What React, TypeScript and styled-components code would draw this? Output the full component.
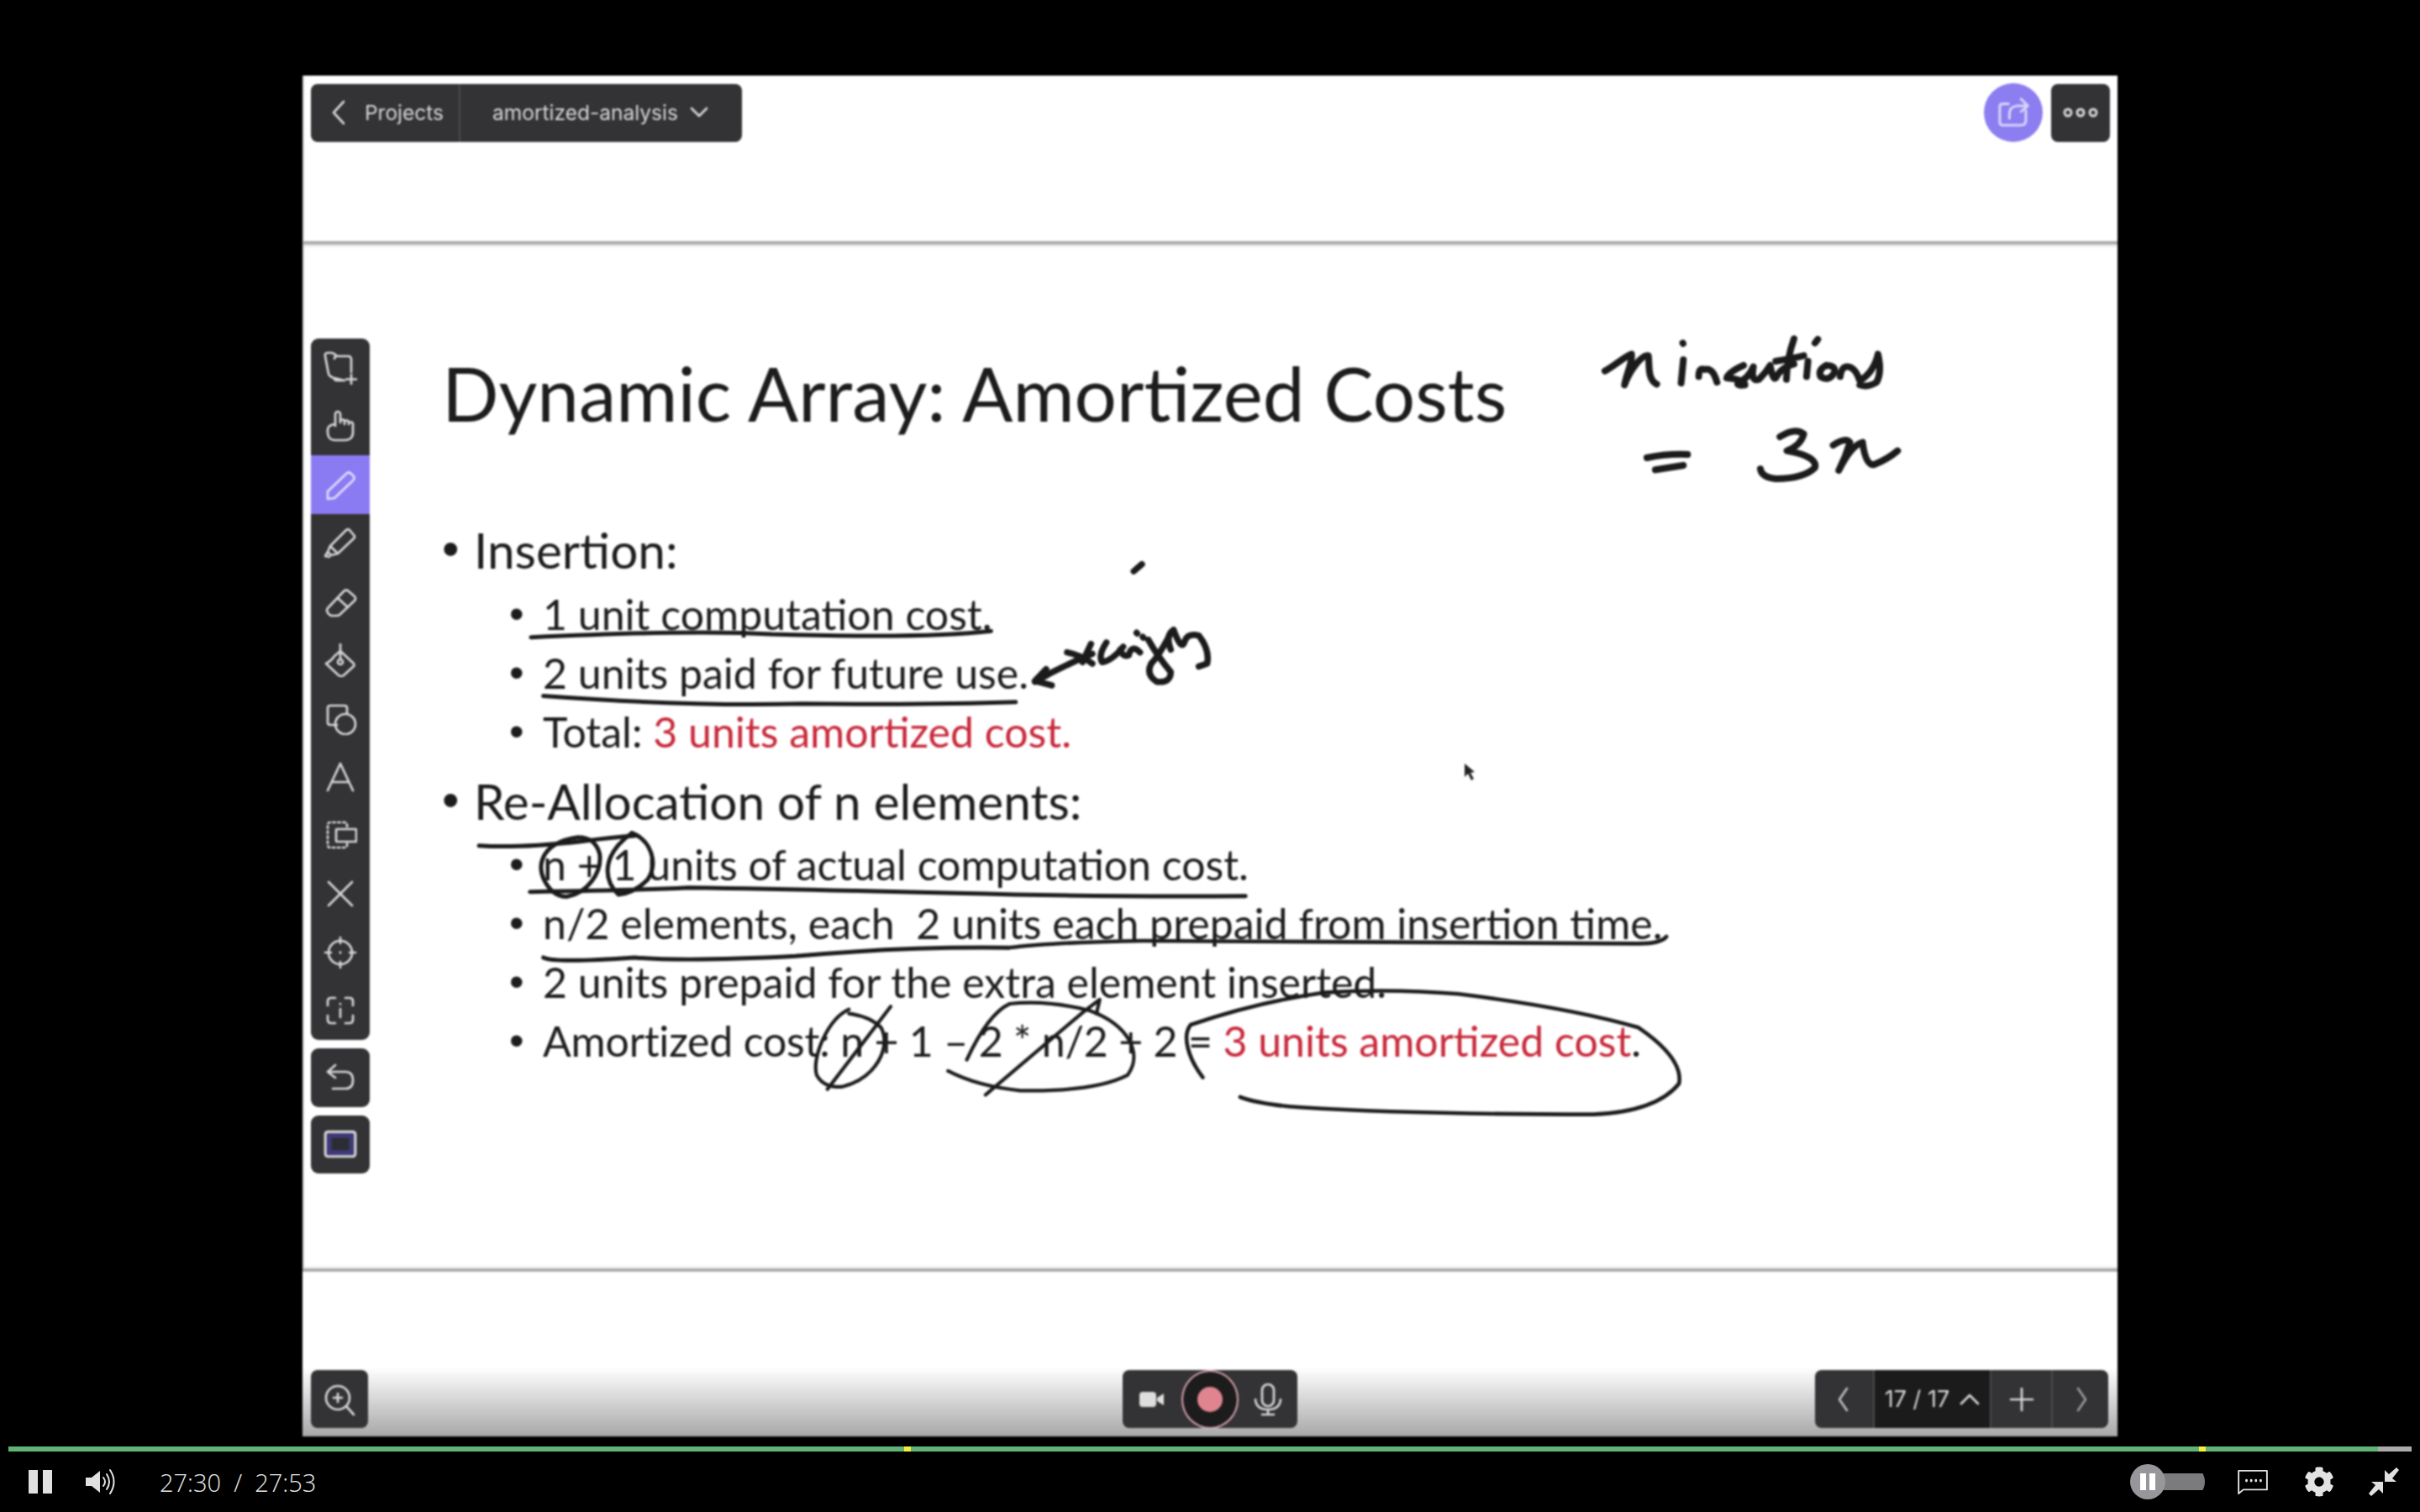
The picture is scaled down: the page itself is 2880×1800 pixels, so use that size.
import { ReactNode } from 'react'
import styled, { createGlobalStyle } from 'styled-components'
import { FaCog } from 'react-icons/fa'

const GlobalStyle = createGlobalStyle`
  html, body {
    margin: 0;
    padding: 0;
    background: #000;
  }
`

const Page = styled.div`
  width: 2880px;
  height: 1800px;
  background: #000;
  overflow: hidden;
  padding-top: 90px;
  box-sizing: border-box;
`

const Frame = styled.div`
  position: relative;
  width: 2160px;
  height: 1620px;
  margin-left: 360px;
  background: #fff;
  display: flex;
  flex-direction: column;
  filter: blur(0.9px);
  box-shadow: inset 2px 0 0 #cfcfcf;
`

const TopBand = styled.div`
  height: 201px;
  flex: none;
  border-bottom: 4px solid #adadad;
  box-sizing: border-box;
  box-shadow: 0 1px 4px rgba(0, 0, 0, 0.2);
`

const BottomBand = styled.div`
  height: 200px;
  flex: none;
  box-sizing: border-box;
  border-top: 4px solid #adadad;
  box-shadow: 0 -1px 4px rgba(0, 0, 0, 0.12);
  background: linear-gradient(#fff 0, #fff 58%, #a8a8a8 100%);
`

const Slide = styled.div`
  flex: 1;
  padding: 127px 0 0 166px;
  font-family: Lato, 'Liberation Sans', sans-serif;
  color: #1c1c1c;
`

const Title = styled.h1`
  margin: 0 0 98px;
  font-size: 89px;
  line-height: 100px;
  font-weight: 400;
`

const BulletList = styled.ul`
  list-style: none;
  margin: 0;
  padding: 0;
`

const Bullet = styled.li<{ $sub?: boolean; $gap?: number }>`
  display: flex;
  white-space: pre;
  margin-left: ${p => (p.$sub ? 80 : 0)}px;
  margin-top: ${p => p.$gap ?? 0}px;
  font-size: ${p => (p.$sub ? 50 : 58.5)}px;
  line-height: ${p => (p.$sub ? 70 : 76)}px;

  &::before {
    content: '•';
    font-family: 'Liberation Sans', sans-serif;
    width: ${p => (p.$sub ? 40 : 38)}px;
    flex: none;
  }
`

const Tight = styled.span`
  letter-spacing: -0.2px;
`

const Red = styled.span`
  color: #c8283a;
`

const Ink = styled.svg`
  position: absolute;
  left: 0;
  top: 0;
  width: 2160px;
  height: 1620px;
  pointer-events: none;
`

const InkPath = styled.path`
  fill: none;
  stroke: #1b1b1b;
  stroke-linecap: round;
  stroke-linejoin: round;
  vector-effect: non-scaling-stroke;
`

const Chrome = styled.div`
  position: absolute;
  inset: 0;
  box-sizing: border-box;
  padding: 9px 9px 10px 10px;
  display: flex;
  flex-direction: column;
  justify-content: space-between;
  font-family: Inter, 'Liberation Sans', sans-serif;
`

const ChromeRow = styled.div`
  display: flex;
  justify-content: space-between;
  align-items: center;
`

const BottomRow = styled.div`
  display: grid;
  grid-template-columns: 1fr auto 1fr;
  align-items: center;
  margin-right: 2px;

  & > :first-child {
    justify-self: start;
  }
  & > :last-child {
    justify-self: end;
  }
`

const Group = styled.div`
  display: flex;
  align-items: center;
  gap: 10px;
`

const Panel = styled.div`
  display: flex;
  align-items: stretch;
  height: 69px;
  background: #333335;
  border-radius: 8px;
  overflow: hidden;
  color: #d6d6d6;
`

const PanelCell = styled.div<{ $w: number; $dark?: boolean; $div?: boolean; $fs?: number }>`
  width: ${p => p.$w}px;
  flex: none;
  box-sizing: border-box;
  display: flex;
  align-items: center;
  justify-content: center;
  gap: 12px;
  font-size: ${p => p.$fs ?? 24.5}px;
  background: ${p => (p.$dark ? '#1b1b1c' : 'transparent')};
  border-left: ${p => (p.$div ? '2px solid #4a4a4c' : 'none')};
`

const Rail = styled.div`
  display: flex;
  flex-direction: column;
  align-items: stretch;
  width: 70px;
  gap: 10px;
  margin-top: 34px;
  margin-bottom: 34px;
`

const RailPanel = styled.div`
  display: flex;
  flex-direction: column;
  background: #333335;
  border-radius: 9px;
  overflow: hidden;
  padding: 0;
  color: #d6d6d6;
`

const RailButton = styled.div<{ $active?: boolean }>`
  height: 69.6px;
  display: flex;
  align-items: center;
  justify-content: center;
  background: ${p => (p.$active ? '#8b7bf3' : 'transparent')};
  color: ${p => (p.$active ? '#e2dcfc' : 'inherit')};
`

const ShareButton = styled.div`
  width: 70px;
  height: 70px;
  border-radius: 50%;
  background: #8c7df0;
  color: #d8d2fb;
  display: flex;
  align-items: center;
  justify-content: center;
`

const Icon = styled.svg<{ $s?: number }>`
  width: ${p => p.$s ?? 40}px;
  height: ${p => p.$s ?? 40}px;
  fill: none;
  stroke: currentColor;
  stroke-width: 2.7;
  stroke-linecap: round;
  stroke-linejoin: round;
  flex: none;
`

const RecordRing = styled.div`
  width: 70px;
  height: 70px;
  box-sizing: border-box;
  border-radius: 50%;
  border: 2px solid #d9a3ad;
  background: #1c1c1d;
  display: flex;
  align-items: center;
  justify-content: center;

  &::after {
    content: '';
    width: 30px;
    height: 30px;
    border-radius: 50%;
    background: #e0858f;
  }
`

const Player = styled.div`
  margin-top: 12px;
  padding: 0 10px;
`

const Progress = styled.div`
  position: relative;
  height: 6px;
  background: #ababab;
`

const Played = styled.div`
  height: 100%;
  background: #5fb376;
`

const Marker = styled.span`
  position: absolute;
  top: 0;
  width: 8px;
  height: 6px;
  background: #f4ee3c;
`

const Controls = styled.div`
  height: 72px;
  display: flex;
  align-items: center;
  justify-content: space-between;
  padding: 0 15px 0 24px;
  color: #e2e2e2;
`

const ControlGroup = styled.div<{ $gap: number }>`
  display: flex;
  align-items: center;
  gap: ${p => p.$gap}px;
`

const Time = styled.div`
  margin-left: 12px;
  font-family: 'Open Sans', 'Liberation Sans', sans-serif;
  font-size: 29px;
  font-weight: 300;
  white-space: pre;
  color: #e6e6e6;
`

const Pause = styled.div<{ $small?: boolean }>`
  display: flex;
  justify-content: space-between;
  width: ${p => (p.$small ? 18 : 28)}px;
  height: ${p => (p.$small ? 20 : 28)}px;

  &::before,
  &::after {
    content: '';
    width: ${p => (p.$small ? 7 : 11)}px;
    background: ${p => (p.$small ? '#fff' : '#e0e0e0')};
  }
`

const SpeedSwitch = styled.div`
  width: 89px;
  height: 42px;
  margin-right: -4px;
  display: flex;
  align-items: center;
  background: linear-gradient(#7b7b7d, #7b7b7d) right center / 70px 20px no-repeat;
  border-radius: 21px;
`

const SpeedKnob = styled.div`
  width: 42px;
  height: 42px;
  border-radius: 50%;
  background: #96969b;
  display: flex;
  align-items: center;
  justify-content: center;
`

const inkGroups: { t: string; w: number; d: string[] }[] = [
  {
    t: 'translate(1880 380) scale(.3333)',
    w: 8,
    d: [
      'M90 185C120 170 165 130 185 125C190 150 165 200 160 235C175 190 220 125 245 130C250 160 240 215 275 232',
      'M368 85L369 87',
      'M370 145L362 228',
      'M425 205Q425 170 445 180Q475 170 490 225',
      'M585 165Q530 190 525 210Q590 215 590 235Q560 240 565 225Q600 215 620 170Q610 225 640 215Q665 190 680 165Q690 220 700 210Q720 170 765 160',
      'M765 70Q740 140 738 215',
      'M700 150Q760 140 800 130',
      'M815 150L810 205',
      'M850 72L840 85',
      'M880 165Q850 180 860 205Q890 225 910 190Q915 165 880 165',
      'M930 205Q935 165 960 170Q985 175 1000 220Q1050 190 1065 125Q1080 190 1060 225Q1030 245 1000 235',
      'M240 495Q310 480 385 483',
      'M270 538Q320 530 370 522',
      'M715 420Q770 385 800 410Q790 450 740 470Q850 490 840 530Q800 570 700 570Q650 565 645 535',
      'M905 450Q950 420 965 440Q950 490 925 540Q970 450 1010 440Q1020 520 1050 520Q1100 500 1135 470',
    ],
  },
  {
    t: 'translate(1180 640) scale(.3333)',
    w: 7.5,
    d: [
      'M508 120L537 95',
      'M155 515Q250 460 360 415',
      'M195 470L155 512L215 528',
      'M270 410Q320 420 360 450',
      'M355 380Q340 410 325 445',
      'M410 375Q380 420 395 445Q430 440 470 390',
      'M460 400Q470 430 490 420Q500 380 530 410',
      'M518 340L520 342',
      'M540 355L542 357',
      'M560 365Q590 420 640 480Q640 520 590 515Q550 490 570 450Q600 420 640 340',
      'M650 330Q620 350 640 400',
      'M650 330Q680 410 690 370Q700 340 740 350Q780 400 770 450L740 460',
    ],
  },
  {
    t: 'scale(1.837)',
    w: 5,
    d: ['M344 413Q450 408 500 411Q600 414 642 409', 'M352 451Q450 458 520 456Q600 457 658 455'],
  },
  {
    t: 'translate(500 960) scale(.6378 .3333)',
    w: 5,
    d: [
      'M110 140Q180 150 300 125Q360 110 400 105',
      'M295 110C220 130 210 230 245 300Q260 325 275 322C310 310 340 240 335 170C330 130 315 110 295 110',
      'M395 95C340 170 340 260 370 315Q400 310 425 260C445 200 430 120 395 95',
      'M205 305Q400 300 500 290Q700 295 1000 310Q1300 325 1540 320',
      'M230 540Q250 560 400 540Q500 555 700 535Q900 500 1098 505',
    ],
  },
  {
    t: 'translate(500 960) scale(.6378 .3333)',
    w: 4.2,
    d: [
      'M800 725C760 760 730 900 740 960Q755 1010 790 1000C850 970 880 860 860 790Q840 750 800 740',
      'M760 1010L878 715',
      'M985 945Q1040 1000 1120 1015Q1260 1020 1320 960C1350 880 1320 780 1250 730Q1170 690 1100 705Q1060 740 1020 905',
      'M1055 1030L1240 730L1268 690L1262 740',
    ],
  },
  {
    t: 'translate(1200 1060) scale(.5357 .3333)',
    w: 4.6,
    d: [
      'M0 205Q100 185 300 180Q800 185 1400 190Q1450 190 1462 165',
      'M432 668C400 600 385 520 405 480Q550 400 700 365Q850 350 1000 370Q1250 420 1400 490Q1500 600 1490 690Q1440 790 1300 800Q900 800 650 775Q560 765 515 738',
    ],
  },
]

const railIcons: ReactNode[] = [
  <>
    <path d="M15 5Q12 2 9 2H5Q1 2 2 6L6 27Q7 30 12 32" />
    <path d="M13 9Q13 6 16 6H29Q33 6 33 10V25M25 35H16Q13 35 13 32Z" />
    <path d="M33 28V39M27 33.5H39" />
  </>,
  <path d="M14 20V6a3 3 0 0 1 6 0V16M20 15a2.5 2.5 0 0 1 5 0v3M25 16a2.5 2.5 0 0 1 5 0v2M30 18a2.5 2.5 0 0 1 5 0v10c0 6-4 9-10 9H14c-6 0-9-4-9-9v-4c0-3 4-6 9-6" />,
  <path d="M5 28L27 7Q30 4 33 7L35 9Q38 12 35 15L13 36L5 37Z" />,
  <path d="M8 24L27 5Q29 3 31 5L36 11Q38 13 36 15L17 33ZM8 24L5 31L9 35L17 33M5 31L2 36L7 37" />,
  <path d="M5 28L24 8Q27 5 30 8L37 14Q39 17 37 19L19 36Q18 37 15 37H9Q5 35 4 31Q4 29 5 28ZM17 16L29 27" />,
  <>
    <path d="M20 9L36 24Q37 26 36 27L24 38Q21 40 18 38L3 24Q10 20 13 15ZM20 0V19" />
    <circle cx="20" cy="22" r="3" />
  </>,
  <>
    <path d="M16 28H8Q5 28 5 25V8Q5 5 8 5H25Q28 5 28 8V14" />
    <circle cx="26" cy="27" r="12" />
  </>,
  <path d="M5 36L20 4L35 36M10 26H30" />,
  <>
    <path d="M28 10V8Q28 5 25 5H8Q5 5 5 8V32Q5 35 8 35H25Q28 35 28 32V30" strokeDasharray="2.5 3.5" />
    <rect x="15" y="13" width="24" height="15" rx="1" />
  </>,
  <path d="M6 6L34 34M34 6L6 34" />,
  <>
    <circle cx="20" cy="20" r="14" />
    <path d="M20 2V9M20 31V38M2 20H9M31 20H38M20 19.5V20.5" />
  </>,
  <path d="M14 5H9Q5 5 5 9V14M26 5H31Q35 5 35 9V14M5 26V31Q5 35 9 35H14M35 26V31Q35 35 31 35H26M20 18V28M20 12V12.5" />,
]

function App() {
  return (
    <Page>
      <GlobalStyle />
      <Frame>
        <TopBand />
        <Slide>
          <Title>Dynamic Array: Amortized Costs</Title>
          <BulletList>
            <Bullet>Insertion:</Bullet>
            <Bullet $sub $gap={4}>1 unit computation cost.</Bullet>
            <Bullet $sub>2 units paid for future use.</Bullet>
            <Bullet $sub>
              Total: <Red>3 units amortized cost.</Red>
            </Bullet>
            <Bullet $gap={9}>Re-Allocation of n elements:</Bullet>
            <Bullet $sub $gap={3}>n + 1 units of actual computation cost.</Bullet>
            <Bullet $sub>n/2 elements, each  2 units each prepaid from insertion time.</Bullet>
            <Bullet $sub>2 units prepaid for the extra element inserted.</Bullet>
            <Bullet $sub>
              <Tight>Amortized cost: n + 1 – 2 * n/2 + 2 = </Tight>
              <Red>3 units amortized cost</Red>.
            </Bullet>
          </BulletList>
        </Slide>
        <BottomBand />

        <Ink viewBox="360 90 2160 1620">
          {inkGroups.map(g => (
            <g key={g.t + g.w} transform={g.t}>
              {g.d.map(d => (
                <InkPath key={d} d={d} strokeWidth={g.w} />
              ))}
            </g>
          ))}
          <path d="M1743 909L1743 925L1747 921L1751 929L1754 927L1750 920L1755 919Z" fill="#222" />
        </Ink>

        <Chrome>
          <ChromeRow>
            <Panel>
              <PanelCell $w={176}>
                <Icon $s={34} viewBox="0 0 34 34">
                  <path d="M21 4L9 17L21 30" />
                </Icon>
                Projects
              </PanelCell>
              <PanelCell $w={337} $div>
                amortized-analysis
                <Icon $s={26} viewBox="0 0 26 26">
                  <path d="M4 8L13 17L22 8" />
                </Icon>
              </PanelCell>
            </Panel>
            <Group>
              <ShareButton>
                <Icon $s={46} viewBox="0 0 40 40">
                  <path d="M15 11H9Q6 11 6 14V30Q6 33 9 33H28Q33 33 33 28V18M16 26V21Q16 14 24 13H34M28 6L35 13L28 19" />
                </Icon>
              </ShareButton>
              <Panel>
                <PanelCell $w={70}>
                  <Icon $s={46} viewBox="0 0 46 14" style={{ strokeWidth: 3 }}>
                    <circle cx="8" cy="7" r="4" />
                    <circle cx="23" cy="7" r="4" />
                    <circle cx="38" cy="7" r="4" />
                  </Icon>
                </PanelCell>
              </Panel>
            </Group>
          </ChromeRow>

          <Rail>
            <RailPanel>
              {railIcons.map((icon, i) => (
                <RailButton key={i} $active={i === 2}>
                  <Icon viewBox="0 0 40 40">{icon}</Icon>
                </RailButton>
              ))}
            </RailPanel>
            <RailPanel>
              <RailButton>
                <Icon viewBox="0 0 40 40">
                  <path d="M14 5L5 13L14 20M5 13H26Q35 13 35 23Q35 33 26 33H11" />
                </Icon>
              </RailButton>
            </RailPanel>
            <RailPanel>
              <RailButton>
                <Icon $s={42} viewBox="0 0 40 40" style={{ strokeWidth: 3 }}>
                  <rect x="3" y="6" width="34" height="28" rx="3" fill="#3e3a78" />
                  <rect x="10" y="13" width="20" height="14" fill="#2c2c34" stroke="none" />
                </Icon>
              </RailButton>
            </RailPanel>
          </Rail>

          <BottomRow>
            <Panel>
              <PanelCell $w={68}>
                <Icon viewBox="0 0 40 40">
                  <circle cx="18" cy="18" r="14" />
                  <path d="M18 13V23M13 18H23M28 28L37 38" />
                </Icon>
              </PanelCell>
            </Panel>
            <Panel>
              <PanelCell $w={70}>
                <Icon $s={30} viewBox="0 0 30 20" style={{ stroke: 'none', fill: '#dedede' }}>
                  <rect x="0" y="1" width="20" height="18" rx="4" />
                  <path d="M21 8L29 3V17L21 12Z" />
                </Icon>
              </PanelCell>
              <PanelCell $w={68}>
                <RecordRing />
              </PanelCell>
              <PanelCell $w={70}>
                <Icon viewBox="0 0 40 40">
                  <rect x="13" y="2" width="14" height="26" rx="7" />
                  <path d="M5 20Q6 32 20 32Q34 32 35 20M20 32V38M13 38H27" />
                </Icon>
              </PanelCell>
            </Panel>
            <Panel>
              <PanelCell $w={69}>
                <Icon $s={34} viewBox="0 0 34 34" style={{ opacity: 0.85 }}>
                  <path d="M20 4L11 17L20 30" />
                </Icon>
              </PanelCell>
              <PanelCell $w={139} $dark $div $fs={27}>
                17 / 17
                <Icon $s={24} viewBox="0 0 24 24">
                  <path d="M2 17L12 7L22 17" />
                </Icon>
              </PanelCell>
              <PanelCell $w={73} $div>
                <Icon $s={32} viewBox="0 0 32 32">
                  <path d="M16 3V29M3 16H29" />
                </Icon>
              </PanelCell>
              <PanelCell $w={68} $div style={{ color: '#999' }}>
                <Icon $s={34} viewBox="0 0 34 34">
                  <path d="M14 4L23 17L14 30" />
                </Icon>
              </PanelCell>
            </Panel>
          </BottomRow>
        </Chrome>
      </Frame>

      <Player>
        <Progress>
          <Played style={{ width: `${(2820 / 2860) * 100}%` }} />
          <Marker style={{ left: 1066 }} />
          <Marker style={{ left: 2607 }} />
        </Progress>
        <Controls>
          <ControlGroup $gap={39}>
            <Pause />
            <Icon $s={38} viewBox="0 0 38 32" style={{ strokeWidth: 2 }}>
              <path d="M1 11H8L18 3V29L8 21H1Z" fill="#e0e0e0" stroke="none" />
              <path d="M22 11Q26 16 22 21M26 7Q32 16 26 25M30 2Q39 16 30 30" />
            </Icon>
            <Time>27:30  /  27:53</Time>
          </ControlGroup>
          <ControlGroup $gap={41}>
            <SpeedSwitch>
              <SpeedKnob>
                <Pause $small />
              </SpeedKnob>
            </SpeedSwitch>
            <Icon viewBox="0 0 40 32" style={{ height: 30, strokeWidth: 2 }}>
              <path d="M2 2H38V26H8L2 31Z" />
              <path d="M12 14V15M18 14V15M24 14V15M30 14V15" strokeWidth="3" />
            </Icon>
            <FaCog size={36} />
            <Icon $s={36} viewBox="0 0 36 36" style={{ stroke: 'none', fill: '#e0e0e0' }}>
              <path d="M33 1L36 4L28 14L33 18H19V4L24 9Z" />
              <path d="M3 35L0 32L8 22L3 18H17V32L12 27Z" />
            </Icon>
          </ControlGroup>
        </Controls>
      </Player>
    </Page>
  )
}

export default App
